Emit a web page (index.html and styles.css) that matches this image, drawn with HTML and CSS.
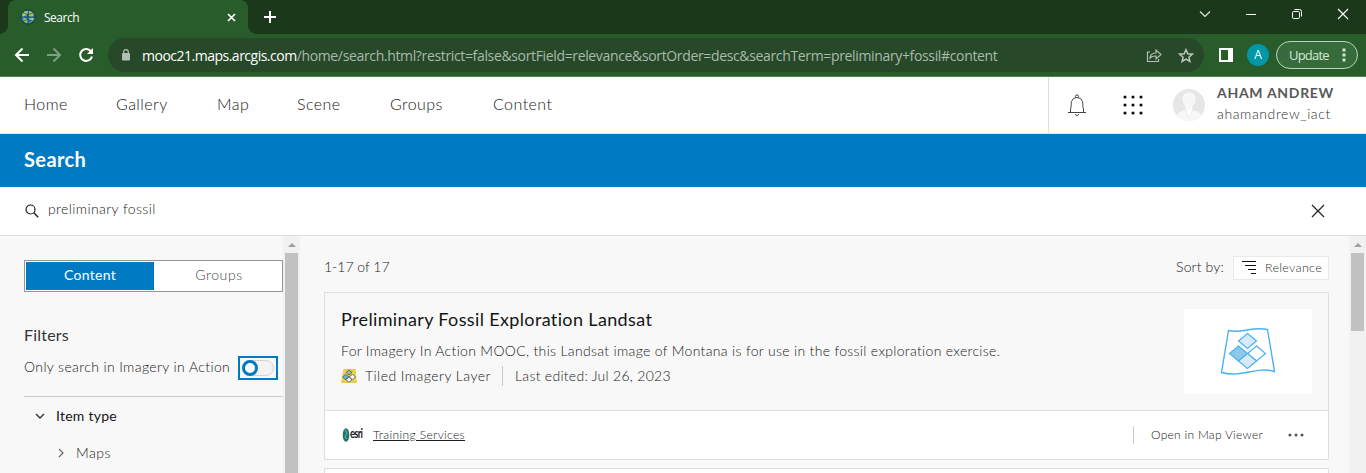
FILE: index.html
```html
<!DOCTYPE html>
<html lang="en">
<head>
<meta charset="utf-8">
<title>Search</title>
<link rel="stylesheet" href="styles.css">
</head>
<body>
<div class="window">
  <div class="tabstrip">
    <div class="tab">
      <svg class="favicon" width="16" height="16" viewBox="0 0 16 16"><circle cx="8" cy="8" r="7.6" fill="#17303c"/><circle cx="8" cy="8" r="6.8" fill="#2f7fb8"/><path d="M2 5l3-3 3 1-1 3-3 1-1 2zM9 2l3 1 2 3-2 2-3-1zM4 9l3 1 1 3-2 1-3-3zM11 9l3 0-1 3-2 1z" fill="#a3c850"/><path d="M1 8h14M8 1v14M3 4q5 3 10 0M3 12q5-3 10 0" fill="none" stroke="#17303c" stroke-width=".6"/><path d="M3 6l2-1M9 10h2M6 3h2" stroke="#b4dcf2"/></svg>
      <span class="tab-title">Search</span>
      <svg class="tab-close" width="9" height="9" viewBox="0 0 9 9"><path d="M1 1l7 7M8 1L1 8" stroke="#fff" stroke-width="1.7"/></svg>
    </div>
    <svg class="newtab" width="12" height="12" viewBox="0 0 12 12"><path d="M6 0v12M0 6h12" stroke="#fff" stroke-width="2"/></svg>
    <div class="wincontrols">
      <svg width="12" height="12" viewBox="0 0 12 12"><path d="M1 3.5l5 5 5-5" fill="none" stroke="#e4ebe4" stroke-width="1.1"/></svg>
      <svg width="12" height="12" viewBox="0 0 12 12"><path d="M1 6.5h10" stroke="#fff"/></svg>
      <svg width="12" height="12" viewBox="0 0 12 12"><rect x="1.5" y="3.5" width="7" height="7" rx="1.2" fill="none" stroke="#fff"/><path d="M3.5 1.5h5q2 0 2 2v5" fill="none" stroke="#fff"/></svg>
      <svg width="12" height="12" viewBox="0 0 12 12"><path d="M1 1l10 10M11 1L1 11" stroke="#fff" stroke-width="1.1"/></svg>
    </div>
  </div>
  <div class="toolbar">
    <svg class="tool" width="16" height="16" viewBox="0 0 16 16"><path d="M15 8H2.5M8.5 1.5L2 8l6.500 6.500" fill="none" stroke="#fff" stroke-width="2"/></svg>
    <svg class="tool" width="16" height="16" viewBox="0 0 16 16"><path d="M1 8h12.500M7.500 1.500L14 8l-6.500 6.500" fill="none" stroke="#7d9f80" stroke-width="2"/></svg>
    <svg class="tool" width="16" height="16" viewBox="0 0 16 16"><path d="M13.300 4.700A6 6 0 1 0 14 9.500" fill="none" stroke="#fff" stroke-width="2"/><path d="M15 1v6H9z" fill="#fff"/></svg>
    <div class="omnibox">
      <svg class="lock" width="10" height="12" viewBox="0 0 10 12"><rect x="1" y="4" width="8" height="7.500" rx="1" fill="#b3bfb5"/><path d="M2.700 5V3a2.300 2.300 0 0 1 4.600 0v2" fill="none" stroke="#b3bfb5" stroke-width="1.200"/></svg>
      <span class="url"><span class="host">mooc21.maps.arcgis.com</span><span class="path">/home/search.html?restrict=false&amp;sortField=relevance&amp;sortOrder=desc&amp;searchTerm=preliminary+fossil#content</span></span>
      <svg class="share" width="16" height="15" viewBox="0 0 16 15"><path d="M4 4H1.500v9.500h11V11M4 10q.5-5 6-5V2l5 4.500-5 4.500V8q-4-.2-6 2z" fill="none" stroke="#b3bfb5" stroke-width="1.200"/></svg>
      <svg class="star" width="16" height="15" viewBox="0 0 16 15"><path d="M8 1.700l1.800 4.100 4.500.4-3.400 3 1 4.300L8 11.200l-3.900 2.300 1-4.300-3.400-3 4.500-.4z" fill="none" stroke="#bcc7bd" stroke-width="1.500"/></svg>
    </div>
    <svg class="panel" width="14" height="14" viewBox="0 0 14 14"><path fill-rule="evenodd" fill="#fff" d="M0 0h14v14H0zM2 2v10h7V2z"/></svg>
    <span class="profile">A</span>
    <span class="update"><span class="update-label">Update</span><svg width="4" height="14" viewBox="0 0 4 14"><path d="M.5.5h3v3h-3zM.5 5.500h3v3h-3zM.5 10.500h3v3h-3z" fill="#cfe3d0"/></svg></span>
  </div>
  <header class="sitenav">
    <nav class="links"><a>Home</a><a>Gallery</a><a>Map</a><a>Scene</a><a>Groups</a><a>Content</a></nav>
    <div class="account">
      <svg class="bell" width="20" height="24" viewBox="0 0 20 24"><path d="M1 19.500h18M3.500 19.500V16C4.500 14 4 10.500 4.500 8.500Q5.500 4.500 10 4.500T15.500 8.500c.5 2 0 5.500 1 7.500v3.500M8.500 4.500V3.300a1.500 1.500 0 0 1 3 0v1.200M8 21.500q2 2 4 0" fill="none" stroke="#444"/></svg>
      <svg class="apps" width="20" height="20" viewBox="0 0 20 20"><path d="M2 2h.01M10 2h.01M18 2h.01M2 10h.01M10 10h.01M18 10h.01M2 18h.01M10 18h.01M18 18h.01" stroke="#111" stroke-width="3.200" stroke-linecap="round"/></svg>
      <svg class="avatar" width="32" height="32" viewBox="0 0 32 32"><circle cx="16" cy="16" r="16" fill="#e6e6e6"/><path d="M3.500 27Q5 22.500 12.500 21v-4Q8.500 13 9.500 8 11 3.500 16 3.500T22.500 8q1 5-3 9v4q8 1.500 9 6Q23 32 16 32T3.500 27z" fill="#f7f7f7"/><path d="M12.500 21l3.500 9 3.500-9" fill="#fff" stroke="#ececec"/></svg>
      <div class="user"><strong class="fullname">AHAM ANDREW</strong><span class="username">ahamandrew_iact</span></div>
    </div>
  </header>
  <div class="titlebar"><h1>Search</h1></div>
  <div class="searchbar">
    <svg class="glass" width="14" height="14" viewBox="0 0 14 14"><circle cx="5.500" cy="5.500" r="4.500" fill="none" stroke="#222" stroke-width="1.200"/><path d="M8.800 8.800l4.400 4.400" stroke="#222" stroke-width="1.500"/></svg>
    <span class="query">preliminary fossil</span>
    <svg class="clear" width="14" height="14" viewBox="0 0 14 14"><path d="M1 1l12 12M13 1L1 13" stroke="#222" stroke-width="1.200"/></svg>
  </div>
  <main class="body">
    <aside class="sidebar">
      <div class="segmented"><span class="seg active">Content</span><span class="seg">Groups</span></div>
      <h2 class="filters">Filters</h2>
      <div class="only"><span class="only-label">Only search in Imagery in Action</span><span class="focus"><span class="track"><span class="knob"></span></span></span></div>
      <div class="group"><svg width="10" height="8" viewBox="0 0 10 8"><path d="M1 2l4 4 4-4" fill="none" stroke="#333" stroke-width="1.400"/></svg><span class="itemtype">Item type</span></div>
      <div class="subgroup"><svg width="8" height="10" viewBox="0 0 8 10"><path d="M2 1l4 4-4 4" fill="none" stroke="#666" stroke-width="1.200"/></svg><span class="maps">Maps</span></div>
    </aside>
    <div class="scroll"><i class="up"></i><i class="thumb long"></i></div>
    <section class="results">
      <div class="resulthead"><span class="count">1-17 of 17</span><span class="sortby">Sort by:</span><span class="sort"><svg width="16" height="14" viewBox="0 0 16 14"><path d="M0 .5h14M3 4.500h11M6 8.500h8M9 12.500h5" stroke="#111"/></svg><span class="relevance">Relevance</span></span></div>
      <article class="card">
        <div class="cardtop">
          <div class="info">
            <h3 class="title">Preliminary Fossil Exploration Landsat</h3>
            <p class="desc"><span>For Imagery In Action MOOC, this Landsat image of Montana is for use in the fossil exploration exercise.</span></p>
            <div class="meta">
              <svg width="16" height="14" viewBox="0 0 16 14"><path d="M2.500 0h12L16 14H0z" fill="#e8ce4c"/><path d="M8 1l3 2.500L8 6 5 3.500z" fill="#9ab8a0" stroke="#556" stroke-width=".8"/><path d="M4.500 5.500L8 8l-3.500 2.500L1.500 8z" fill="#70add8" stroke="#556" stroke-width=".8"/><path d="M11.500 5.500l3 2.500-3 2.500L8 8z" fill="#fff" stroke="#556" stroke-width=".8"/><path d="M8 8l3 2.700L8 13.300l-3-2.600z" fill="#eef2f5" stroke="#556" stroke-width=".8"/></svg>
              <span class="kind">Tiled Imagery Layer</span><span class="edited">Last edited: Jul 26, 2023</span>
            </div>
          </div>
          <div class="thumbnail"><svg width="56" height="50" viewBox="0 0 56 50"><path d="M8.500 3.500C23 7 31-1 47.500 2.500L54.500 44.500C37 39 21 51 1.500 45.500z" fill="#fff" stroke="#4cb1ee" stroke-width="1.400"/><g stroke="#4cb1ee" stroke-width="1.200"><path d="M27.500 6.500l9 7.500-9 7.500-9-7.500z" fill="#d6eafa"/><path d="M18.500 19l9 7.500-9 7.500-9-7.500z" fill="#8bcae8"/><path d="M36.500 19l9 7.500-9 7.500-9-7.500z" fill="#fff"/><path d="M27.500 26.500l9 7.500-9 7.500-9-7.500z" fill="#d6eafa"/></g></svg></div>
        </div>
        <div class="cardfoot">
          <span class="logo"><svg width="8" height="14" viewBox="0 0 8 14"><ellipse cx="4" cy="7" rx="3.300" ry="6.700" fill="#28705e"/><path d="M3 2q3 3 1 5t1 4" fill="none" stroke="#4aa0c8" stroke-width="1.500"/></svg><span class="esri">esri</span></span>
          <a class="owner">Training Services</a>
          <span class="open">Open in Map Viewer</span>
          <svg class="more" width="16" height="4" viewBox="0 0 16 4"><circle cx="2" cy="2" r="1.600"/><circle cx="8" cy="2" r="1.600"/><circle cx="14" cy="2" r="1.600"/></svg>
        </div>
      </article>
      <article class="card next"></article>
    </section>
    <div class="scroll"><i class="up"></i><i class="thumb short"></i></div>
  </main>
</div>
</body>
</html>
```
FILE: styles.css
```css
* { box-sizing: border-box; }
body { margin: 0; font-family: Lato, sans-serif; font-weight: 300; color: #202020; }
h1, h2, h3, p { margin: 0; font-weight: 400; }
svg { display: block; flex: none; }
span, a, strong { white-space: nowrap; }
.window { width: 1366px; height: 473px; overflow: hidden; display: flex; flex-direction: column; background: #fff; }

.tabstrip { flex: none; height: 34px; background: #1b381b; display: flex; font-family: "Open Sans", sans-serif; font-weight: 400; padding-left: 8px; }
.tab { width: 240px; background: #285d2b; border-radius: 8px 8px 0 0; display: flex; align-items: center; padding: 0 12px; color: #fff; font-size: 12px; position: relative; }
.tab::before, .tab::after { content: ""; position: absolute; bottom: 0; width: 8px; height: 8px; }
.tab::before { left: -8px; background: radial-gradient(circle at 0 0, #1b381b 7.5px, #285d2b 8px); }
.tab::after { right: -8px; background: radial-gradient(circle at 100% 0, #1b381b 7.5px, #285d2b 8px); }
.tab-title { margin-left: 8px; letter-spacing: -.5px; }
.tab-close { margin-left: auto; }
.newtab { margin: 11px 0 0 16px; }
.wincontrols { display: flex; gap: 34px; margin: 8px 17px 0 auto; }

.toolbar { flex: none; height: 43px; background: #285d2b; border-bottom: 1px solid #4b8052; display: flex; align-items: center; padding: 0 8px 0 14px; font-family: "Open Sans", sans-serif; font-weight: 400; }
.tool { margin-right: 16px; }
.omnibox { width: 1096px; height: 34px; margin-left: -2px; background: #274829; border-radius: 17px; display: flex; align-items: center; padding: 0 10px 0 13px; }
.url { margin-left: 11px; font-size: 14px; }
.host { color: #fff; letter-spacing: -.5px; }
.path { color: #a9bbab; letter-spacing: -.35px; }
.share { margin-left: auto; }
.star { margin-left: 16px; }
.panel { margin-left: 15px; }
.profile { width: 22px; height: 22px; margin-left: 14px; border-radius: 50%; background: #0097a7; color: #fff; font: 12px/22px "Open Sans", sans-serif; text-align: center; }
.update { margin-left: 7px; width: 82px; height: 28px; border: 1px solid #bdd3be; border-radius: 14px; background: #386b3b; display: flex; align-items: center; padding: 0 11px 0 12px; justify-content: space-between; color: #d3e9d4; font-size: 13px; }
.update-label { letter-spacing: -.8px; }

.sitenav { flex: none; height: 57px; border-bottom: 1px solid #dbe5ea; display: flex; }
.links { display: grid; grid-template-columns: 92px 101px 80px 93px 103px 80px; padding: 0 0 3px 24px; align-items: center; font-size: 16px; }
.links a { letter-spacing: .45px; }
.account { margin-left: auto; width: 318px; border-left: 1px solid #ddd; display: flex; align-items: center; padding-left: 18px; }
.apps { margin-left: 36px; }
.avatar { margin-left: 30px; }
.user { margin: -4px 0 0 12px; display: flex; flex-direction: column; }
.fullname { font-size: 14px; font-weight: 700; line-height: 21px; color: #595959; letter-spacing: .7px; }
.username { font-size: 14px; line-height: 21px; color: #303030; letter-spacing: .6px; }

.titlebar { flex: none; height: 53px; background: #007ac2; padding: 0 24px; display: flex; align-items: center; }
.titlebar h1 { color: #fff; font-size: 20px; line-height: 26px; font-weight: 700; margin-top: -4px; letter-spacing: .4px; }
.searchbar { flex: none; height: 49px; border-bottom: 1px solid #dfdfdf; display: flex; align-items: center; padding: 0 41px 0 25px; }
.query { margin: -5px 0 0 9px; font-size: 14px; letter-spacing: .4px; }
.clear { margin-left: auto; }

.body { flex: 1; min-height: 0; display: flex; background: #f8f8f8; }
.sidebar { width: 283px; padding: 24px 0 0 24px; }
.segmented { height: 32px; border: 1px solid #959595; background: #fff; padding: 1px; display: grid; grid-template-columns: 128px 1fr; font-size: 14px; }
.seg { display: flex; align-items: center; justify-content: center; color: #444; padding: 0 0 3px 3px; letter-spacing: .6px; }
.seg.active { padding-left: 0; background: #007ac2; color: #fff; font-weight: 400; letter-spacing: .3px; }
.filters { font-size: 16px; line-height: 20px; margin-top: 33px; color: #333; letter-spacing: .2px; }
.only { display: flex; align-items: center; height: 24px; margin-top: 11px; justify-content: space-between; padding-right: 5px; font-size: 14px; }
.only-label { padding-bottom: 3px; letter-spacing: .38px; }
.focus { width: 40px; height: 24px; border: 2px solid #007ac2; padding: 2px; }
.track { display: block; width: 32px; height: 16px; border: 1px solid #d2d2d2; border-radius: 8px; background: #f3f3f3; }
.knob { display: block; width: 16px; height: 16px; margin: -1px; border: 3px solid #007ac2; border-radius: 50%; background: #fff; }
.group { margin-top: 16px; border-top: 1px solid #cacaca; padding: 9px 0 0 11px; display: flex; align-items: center; gap: 11px; font-size: 14px; font-weight: 400; line-height: 20px; color: #151515; letter-spacing: .25px; }
.subgroup { margin-top: 17px; padding-left: 33px; display: flex; align-items: center; gap: 11px; font-size: 14px; line-height: 20px; letter-spacing: .5px; }

.scroll { width: 17px; flex: none; background: #f1f1f1; display: flex; flex-direction: column; align-items: center; }
.up { margin: 7px 0 6px; border: 4px solid transparent; border-top: 0; border-bottom-color: #a0a0a0; }
.thumb { width: 13px; background: #c1c1c1; }
.long { flex: 1; }
.short { height: 78px; }

.results { flex: 1; padding: 20px 20px 0 24px; }
.resulthead { height: 24px; display: flex; align-items: center; font-size: 14px; }
.count, .sortby { padding-bottom: 3px; }
.sortby { margin-left: auto; letter-spacing: .15px; }
.sort { width: 96px; height: 24px; margin-left: 9px; border: 1px solid #eaeaea; background: #fff; display: flex; align-items: center; padding-left: 8px; color: #303030; font-size: 12.500px; letter-spacing: .3px; }
.relevance { margin-left: 7px; padding-bottom: 2px; }
.card { margin-top: 12px; border: 1px solid #dfdfdf; height: 168px; }
.card.next { margin-top: 8px; background: #fff; }
.cardtop { height: 118px; border-bottom: 1px solid #dfdfdf; display: flex; padding: 16px 16px 0; justify-content: space-between; }
.title { font-size: 18px; line-height: 24px; color: #151515; margin-top: -2px; letter-spacing: .36px; }
.desc { font-size: 14px; font-weight: 300; line-height: 22px; margin-top: 9px; letter-spacing: .32px; }
.meta { display: flex; align-items: center; margin-top: 3px; height: 22px; font-size: 14px; letter-spacing: .45px; }
.kind { margin-left: 8px; width: 126px; padding-bottom: 2px; }
.edited { margin-left: 11px; border-left: 1px solid #cacaca; line-height: 20px; padding-left: 12px; letter-spacing: .28px; }
.thumbnail { width: 128px; height: 85px; background: #fff; display: grid; place-items: center; }
.cardfoot { height: 48px; background: #fff; display: flex; align-items: center; padding: 0 24px 0 16px; font-size: 12px; }
.logo { width: 24px; height: 24px; display: flex; align-items: center; padding-left: 1px; }
.esri { margin-top: -2px; font: 700 9.500px/14px Lato, sans-serif; letter-spacing: -.8px; color: #222; transform: scaleY(1.3); }
.owner { margin: -2px 0 0 8px; text-decoration: underline; letter-spacing: .37px; }
.open { margin-left: auto; border-left: 1px solid #cacaca; line-height: 18px; padding-left: 17px; letter-spacing: .28px; }
.more { margin-left: 25px; fill: #595959; }
```
